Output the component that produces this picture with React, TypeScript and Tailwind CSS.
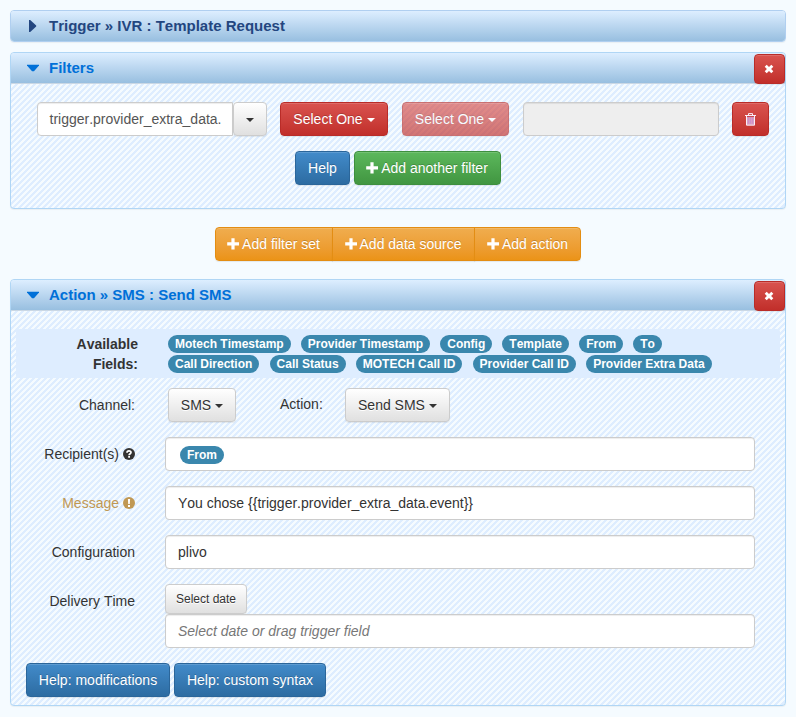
import type { ReactNode } from 'react';

const btn =
  'inline-flex items-center justify-center whitespace-nowrap rounded-[4px] border bg-linear-to-b text-[14px] leading-[20px]';
const light = 'border-[#ccc] from-white to-[#e0e0e0] text-[#333] [text-shadow:0_1px_0_#fff]';
const shine =
  'text-white [text-shadow:0_-1px_0_rgba(0,0,0,0.2)] shadow-[inset_0_1px_0_rgba(255,255,255,0.15),0_1px_1px_rgba(0,0,0,0.075)]';
const lightShine = 'shadow-[inset_0_1px_0_rgba(255,255,255,0.15),0_1px_1px_rgba(0,0,0,0.075)]';
const red = 'border-[#b92c28] from-[#d9534f] to-[#c12e2a]';
const blue = 'border-[#2b669a] from-[#428bca] to-[#2d6ca2]';
const green = 'border-[#3e8f3e] from-[#5cb85c] to-[#419641]';
const orange = 'border-[#e38d13] from-[#f0ad4e] to-[#eb9316]';
const field =
  'flex h-[34px] items-center rounded-[4px] border border-[#ccc] bg-white px-[12px] text-[14px] shadow-[inset_0_1px_1px_rgba(0,0,0,0.075)]';

function Caret() {
  return (
    <span className="ml-[4px] mt-px h-0 w-0 border-x-4 border-t-4 border-x-transparent border-t-current" />
  );
}

function Plus() {
  return (
    <svg className="mr-[3px] h-[12px] w-[12px]" viewBox="0 0 12 12" fill="currentColor">
      <path d="M4.4 0.3h3.2v4H12v3.3H7.6v3.9H4.4V7.6H0.2V4.3h4.2z" />
    </svg>
  );
}

function Cross() {
  return (
    <svg className="mr-px h-[10px] w-[10px]" viewBox="0 0 10 10" fill="currentColor">
      <path d="M2.7 0.8 5 3.1 7.3 0.8 9.3 2.8 7.1 5 9.3 7.2 7.3 9.2 5 6.9 2.7 9.2 0.7 7.2 2.9 5 0.7 2.8z" />
    </svg>
  );
}

function Trash() {
  return (
    <svg className="h-[13px] w-[13px]" viewBox="0 0 13 13" fill="none" stroke="currentColor">
      <path d="M2.5 3.5h8v8.5h-8z" fill="#d9a0c0" stroke="none" />
      <path d="M1 2.5h11M4.5 2V.6h4V2M2.5 3v9.2h8V3" stroke="#f9eef9" />
      <path d="M4.5 4.5v6M6.5 4.5v6M8.5 4.5v6" stroke="#c98bd0" strokeWidth="0.8" />
      <path d="M3 3.6h7" stroke="#c9444a" />
    </svg>
  );
}

function QuestionSign() {
  return (
    <svg className="ml-[4px] h-[12px] w-[12px]" viewBox="0 0 12 12">
      <circle cx="6" cy="6" r="6" fill="currentColor" />
      <path d="M4 4.7C4 2.4 8 2.4 8 4.4 8 5.8 6.1 5.6 6.1 7.2" fill="none" stroke="#fff" strokeWidth="1.7" />
      <path d="M5.2 8.1h1.8v1.7H5.2z" fill="#fff" />
    </svg>
  );
}

function ExclamationSign() {
  return (
    <svg className="ml-[4px] h-[12px] w-[12px]" viewBox="0 0 12 12">
      <circle cx="6" cy="6" r="6" fill="currentColor" />
      <path d="M4.9 2h2.2L6.8 7H5.2zM5 8h2v1.9H5z" fill="#fff" />
    </svg>
  );
}

function Header({ title, open, closable }: { title: string; open?: boolean; closable?: boolean }) {
  return (
    <div
      className={`flex h-[30px] items-center rounded-t-[3px] bg-linear-to-b from-[#ddeeff] to-[#98bfe0] pl-[16px] text-[15px] font-bold leading-[20px] ${open ? 'text-[#0070d8]' : 'rounded-b-[3px] text-[#234680]'}`}
    >
      <svg className="mr-[10px] h-[12px] w-[12px]" viewBox="0 0 12 12" fill="currentColor">
        {open ? <path d="M0 2.8h12v.6L7 9.3H5L0 3.4z" /> : <path d="M2 0h1.2L9.2 5.6v.8L3.2 12H2z" />}
      </svg>
      <span>{title}</span>
      {closable && (
        <button className={`${btn} ${red} ${shine} ml-auto mt-px h-[30px] w-[31px] shrink-0 self-start rounded-[3px]`}>
          <Cross />
        </button>
      )}
    </div>
  );
}

function Panel({ title, className, children }: { title: string; className: string; children: ReactNode }) {
  return (
    <section
      className={`rounded-[4px] border border-[#b0d6f5] bg-[#f5fbff] bg-[linear-gradient(135deg,#deedff_25%,transparent_25%,transparent_50%,#deedff_50%,#deedff_75%,transparent_75%,transparent)] bg-[length:6px_6px] shadow-[0_1px_1px_rgba(0,0,0,0.05)] ${className}`}
    >
      <Header title={title} open closable />
      <div className="h-px bg-[#cbd8e5]" />
      {children}
    </section>
  );
}

function Badge({ children }: { children: ReactNode }) {
  return (
    <span className="inline-flex h-[18px] items-center whitespace-nowrap rounded-[9px] bg-[#3a87ad] px-[7px] text-[12px] font-bold leading-[18px] text-white">
      {children}
    </span>
  );
}

function Row({ label, children }: { label: ReactNode; children: ReactNode }) {
  return (
    <div className="mb-[15px] flex pr-[30px]">
      <div className="mr-[30px] flex h-[34px] w-[124px] shrink-0 items-center justify-end text-[14px]">{label}</div>
      <div className="w-[590px]">{children}</div>
    </div>
  );
}

export default function App() {
  return (
    <main className="h-[717px] w-[796px] overflow-hidden bg-[#f5fbff] px-[10px] pt-[10px] font-['Liberation_Sans',Arial,sans-serif] text-[14px] leading-[20px] text-[#333] [font-kerning:none]">
      <section className="h-[32px] rounded-[4px] border border-[#b0cff0] shadow-[0_1px_1px_rgba(0,0,0,0.05)]">
        <Header title="Trigger » IVR : Template Request" />
      </section>

      <Panel title="Filters" className="mt-[10px] h-[157px]">
        <div className="mt-[18px] flex pl-[26px]">
          <div className={`${field} w-[196px] overflow-hidden rounded-r-none whitespace-nowrap px-[11.5px]! text-[#555]`}>
            trigger.provider_extra_data.
          </div>
          <button className={`${btn} ${light} ${lightShine} h-[34px] w-[34px]`}>
            <span className="-ml-[4px] inline-flex"><Caret /></span>
          </button>
          <button className={`${btn} ${red} ${shine} ml-[13px] h-[34px] w-[108px]`}>
            Select One
            <Caret />
          </button>
          <button className={`${btn} ${red} ${shine} ml-[14px] h-[34px] w-[107px] opacity-65`}>
            Select One
            <Caret />
          </button>
          <div className={`${field} ml-[14px] w-[196px] bg-[#eee]!`} />
          <button className={`${btn} ${red} ${shine} ml-[13px] h-[34px] w-[37px]`}>
            <Trash />
          </button>
        </div>
        <div className="mt-[15px] flex justify-center gap-[4px]">
          <button className={`${btn} ${blue} ${shine} h-[34px] w-[55px]`}>Help</button>
          <button className={`${btn} ${green} ${shine} h-[34px] w-[147px] pr-px`}>
            <Plus />
            Add another filter
          </button>
        </div>
      </Panel>

      <div className="mt-[18px] flex justify-center">
        <button className={`${btn} ${orange} ${shine} h-[34px] w-[118px] rounded-r-none pr-px`}>
          <Plus />
          Add filter set
        </button>
        <button className={`${btn} ${orange} ${shine} -ml-px h-[34px] w-[143px] rounded-none pr-px`}>
          <Plus />
          Add data source
        </button>
        <button className={`${btn} ${orange} ${shine} -ml-px h-[34px] w-[107px] rounded-l-none`}>
          <Plus />
          Add action
        </button>
      </div>

      <Panel title="Action » SMS : Send SMS" className="mt-[18px] h-[427px]">
        <div className="mx-[5px] mt-[18px] flex h-[49px] rounded-[3px] bg-[#deedff] pt-[5px]">
          <div className="w-[122px] text-right font-bold leading-[20px]">
            Available
            <br />
            Fields:
          </div>
          <div className="ml-[30px] flex flex-col gap-[2px] pt-[1px]">
            <div className="flex gap-[10.1px]">
              {['Motech Timestamp', 'Provider Timestamp', 'Config', 'Template', 'From', 'To'].map((name) => (
                <Badge key={name}>{name}</Badge>
              ))}
            </div>
            <div className="flex gap-[10.2px]">
              {['Call Direction', 'Call Status', 'MOTECH Call ID', 'Provider Call ID', 'Provider Extra Data'].map((name) => (
                <Badge key={name}>{name}</Badge>
              ))}
            </div>
          </div>
        </div>

        <div className="mb-[15px] mt-[10px] flex h-[34px] items-center">
          <div className="w-[124px] text-right">Channel:</div>
          <button className={`${btn} ${light} ${lightShine} ml-[33px] h-[34px] w-[68px]`}>
            SMS
            <Caret />
          </button>
          <div className="mb-[2px] ml-[44px] w-[65px]">Action:</div>
          <button className={`${btn} ${light} ${lightShine} h-[34px] w-[105px]`}>
            Send SMS
            <Caret />
          </button>
        </div>

        <Row label={<>Recipient(s)<QuestionSign /></>}>
          <div className={field}>
            <span className="ml-[2px] mt-[2px] inline-flex"><Badge>From</Badge></span>
          </div>
        </Row>
        <Row label={<span className="flex items-center text-[#c09853]">Message<ExclamationSign /></span>}>
          <div className={field}>{'You chose {{trigger.provider_extra_data.event}}'}</div>
        </Row>
        <Row label="Configuration">
          <div className={field}>plivo</div>
        </Row>
        <Row label="Delivery Time">
          <button className={`${btn} ${light} ${lightShine} flex! h-[30px] w-[82px] rounded-[3px] text-[12px]! leading-[18px]!`}>
            Select date
          </button>
          <div className={`${field} italic text-[#777]`}>Select date or drag trigger field</div>
        </Row>
        <div className="flex gap-[4px] pl-[15px]">
          <button className={`${btn} ${blue} ${shine} h-[34px] w-[144px]`}>Help: modifications</button>
          <button className={`${btn} ${blue} ${shine} h-[34px] w-[152px]`}>Help: custom syntax</button>
        </div>
      </Panel>
    </main>
  );
}
